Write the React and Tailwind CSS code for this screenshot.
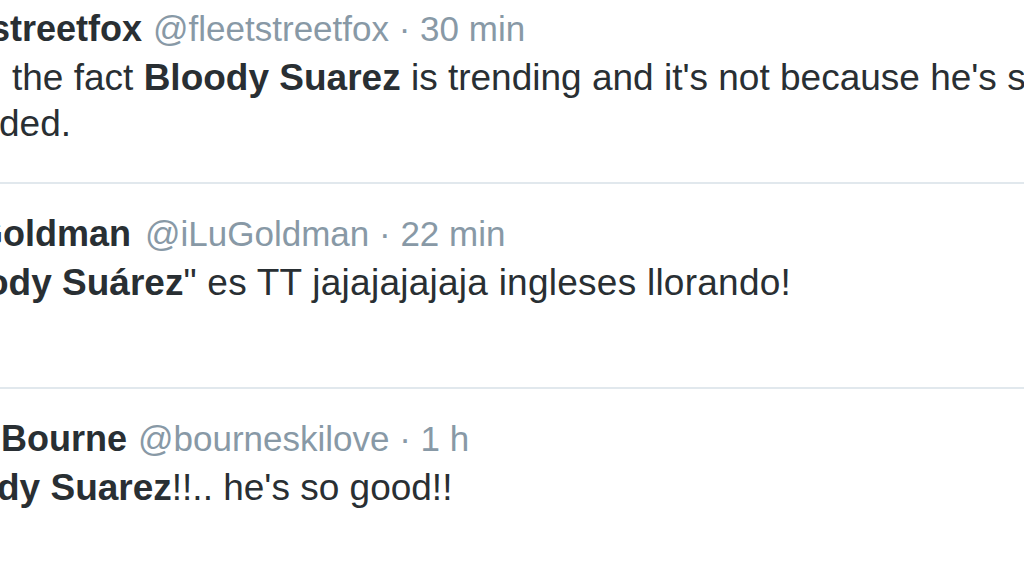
import React from 'react';

// Fragmento recortado de una lista de tweets (vista ampliada)
const tweets = [
    {
        id: 1,
        name: 'streetfox',
        nameOffset: 'ml-[-10px]',
        handleGap: 'ml-[11px]',
        handle: '@fleetstreetfox',
        time: '30 min',
        lines: [
            {
                offset: 'ml-[12px]',
                parts: [
                    { text: 'the fact ' },
                    { text: 'Bloody Suarez', bold: true },
                    { text: " is trending and it's not because he's suspended." },
                ],
            },
            { offset: 'ml-[-1px]', parts: [{ text: 'ded.' }] },
        ],
    },
    {
        id: 2,
        name: 'Goldman',
        nameOffset: 'ml-[-25px]',
        handleGap: 'ml-[14px]',
        handle: '@iLuGoldman',
        time: '22 min',
        lines: [
            {
                offset: 'ml-[-14px]',
                parts: [
                    { text: 'ody Suárez', bold: true },
                    { text: '" es TT jajajajajaja ingleses llorando!', wide: true },
                ],
            },
        ],
    },
    {
        id: 3,
        name: 'Bourne',
        nameOffset: 'ml-[1px]',
        handleGap: 'ml-[11px]',
        handle: '@bourneskilove',
        time: '1 h',
        lines: [
            {
                offset: 'ml-[-3px]',
                parts: [
                    { text: 'dy Suarez', bold: true },
                    { text: '!!.. he\'s so good!!' },
                ],
            },
        ],
    },
];

const Tweet = ({ tweet }) => (
    <div className="h-[205px] shrink-0 border-b-2 border-[#e1e8ed] pt-[30px]">
        {/* Cabecera: nombre, usuario y hora */}
        <div className="flex items-baseline whitespace-nowrap leading-[40px]">
            <span className={`text-[36px] font-bold text-[#292f33] ${tweet.nameOffset}`}>
                {tweet.name}
            </span>
            <span className={`text-[35px] text-[#8899a6] ${tweet.handleGap}`}>
                {tweet.handle} · {tweet.time}
            </span>
        </div>

        {/* Texto del tweet */}
        <div className="mt-[6px]">
            {tweet.lines.map((line, i) => (
                <div
                    key={i}
                    className={`whitespace-nowrap text-[37px] leading-[46px] text-[#292f33] ${line.offset}`}
                >
                    {line.parts.map((p, j) => (
                        <span
                            key={j}
                            className={p.bold ? 'font-bold' : p.wide ? 'tracking-[0.25px]' : ''}
                        >
                            {p.text}
                        </span>
                    ))}
                </div>
            ))}
        </div>
    </div>
);

export default function App() {
    return (
        <div
            className="h-[576px] w-[1024px] overflow-hidden bg-white"
            style={{ fontFamily: '"Liberation Sans", Arial, sans-serif' }}
        >
            <div className="mt-[-21px] flex flex-col">
                {tweets.map(t => <Tweet key={t.id} tweet={t} />)}
            </div>
        </div>
    );
}
